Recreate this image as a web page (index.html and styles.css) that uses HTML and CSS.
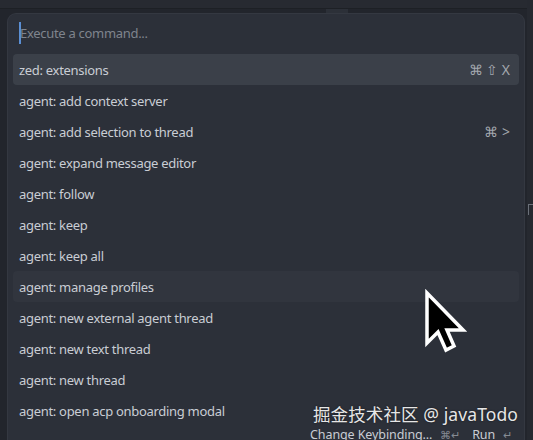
FILE: index.html
```html
<!DOCTYPE html>
<html>
<head>
<meta charset="utf-8">
<link rel="stylesheet" href="styles.css">
</head>
<body>
<div class="topbar"><div class="notch"></div></div>
<div class="sidebar-edge"><div class="bracket"></div></div>
<div class="panel">
  <div class="input"><span class="caret"></span><span class="placeholder">Execute a command...</span></div>
  <div class="list">
    <div class="row selected"><span>zed: extensions</span><span class="keys">⌘ ⇧ X</span></div>
    <div class="row"><span>agent: add context server</span></div>
    <div class="row"><span>agent: add selection to thread</span><span class="keys">⌘ &gt;</span></div>
    <div class="row"><span>agent: expand message editor</span></div>
    <div class="row"><span>agent: follow</span></div>
    <div class="row"><span>agent: keep</span></div>
    <div class="row"><span>agent: keep all</span></div>
    <div class="row hover"><span>agent: manage profiles</span></div>
    <div class="row"><span>agent: new external agent thread</span></div>
    <div class="row"><span>agent: new text thread</span></div>
    <div class="row"><span>agent: new thread</span></div>
    <div class="row"><span>agent: open acp onboarding modal</span></div>
  </div>
  <div class="footer">
    <span class="fl">Change Keybinding...</span><span class="fk">⌘↵</span>
    <span class="fl run">Run</span><span class="fk">↵</span>
  </div>
</div>
<div class="watermark">掘金技术社区 @ javaTodo</div>
<svg class="cursor" width="44" height="64" viewBox="-4 -4 44 64">
  <polygon points="0,0 0,50 11,39 19,57 27,53 20,37 36,37" fill="#000" stroke="#fff" stroke-width="3.5" stroke-linejoin="miter"/>
</svg>
</body>
</html>
```

FILE: styles.css
```css
html, body {
  margin: 0;
  padding: 0;
  height: 440px;
  overflow: hidden;
}
body {
  background: #22252c;
  font-family: "Noto Sans", "Open Sans", sans-serif;
  font-size: 13px;
  letter-spacing: -0.3px;
  color: #c9cdd4;
  position: relative;
}
.topbar {
  height: 8px;
  background: #272a31;
  border-bottom: 1px solid #1d2025;
  position: relative;
}
.notch {
  position: absolute;
  left: 326px;
  top: 9px;
  width: 22px;
  height: 5px;
  background: #2c3038;
}
.sidebar-edge {
  position: absolute;
  right: 0;
  top: 0;
  width: 6px;
  height: 440px;
  background: #262930;
}
.bracket {
  position: absolute;
  left: 1px;
  top: 204px;
  width: 4px;
  height: 10px;
  border-left: 1px solid #6b7079;
  border-top: 1px solid #6b7079;
}
.panel {
  position: absolute;
  left: 8px;
  top: 14px;
  width: 516px;
  height: 440px;
  background: #2c3039;
  border-radius: 8px 8px 0 0;
  box-shadow: 0 0 0 1px #343841;
}
.input {
  height: 38px;
  display: flex;
  align-items: center;
  padding-left: 11px;
  font-size: 13px;
}
.caret {
  width: 2px;
  height: 22px;
  background: #5b8fd4;
  margin-right: -1px;
}
.placeholder {
  color: #7f848d;
}
.list {
  padding: 2px 5px 0 5px;
  height: 372px;
  overflow: hidden;
}
.row {
  height: 31px;
  display: flex;
  align-items: center;
  justify-content: space-between;
  padding: 0 9px 0 6px;
  border-radius: 4px;
}
.row.selected {
  background: #3b4049;
}
.row.hover {
  background: #31353e;
}
.keys {
  color: #a3a7ae;
  font-size: 14px;
  letter-spacing: 0;
}
.footer {
  display: flex;
  justify-content: flex-end;
  align-items: center;
  padding: 0 12px 0 0;
  height: 16px;
  font-size: 12.5px;
  letter-spacing: -0.1px;
}
.fl {
  color: #c9cdd4;
}
.fk {
  color: #858a93;
  margin-left: 8px;
  font-size: 11px;
}
.run {
  margin-left: 12px;
}
.watermark {
  position: absolute;
  left: 313px;
  top: 401px;
  font-size: 17.5px;
  letter-spacing: 0.1px;
  color: #e6e6e6;
  font-family: "Noto Sans", "Noto Sans CJK SC", sans-serif;
  text-shadow: 0 0 2px rgba(0,0,0,0.6);
}
.cursor {
  position: absolute;
  left: 423px;
  top: 289px;
}
```
